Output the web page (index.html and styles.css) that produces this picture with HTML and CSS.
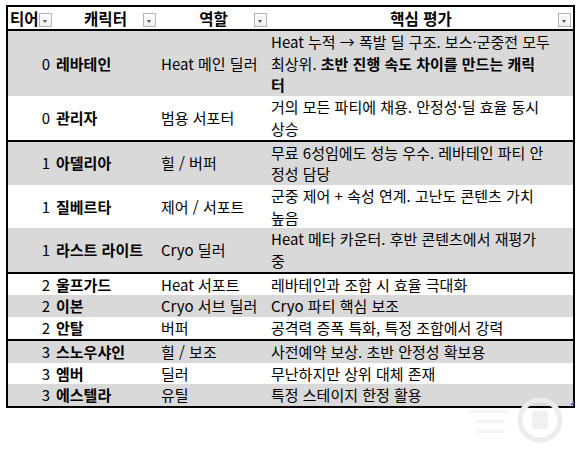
FILE: index.html
```html
<!DOCTYPE html>
<html lang="ko">
<head>
<meta charset="utf-8">
<link rel="stylesheet" href="styles.css">
</head>
<body>
<div class="sheet">
<table class="tier">
  <colgroup>
    <col class="c-tier"><col class="c-name"><col class="c-role"><col class="c-eval">
  </colgroup>
  <thead>
    <tr>
      <th class="h-tier"><span class="h-text">티어</span><span class="dd"></span></th>
      <th><span class="h-text">캐릭터</span><span class="dd"></span></th>
      <th><span class="h-text">역할</span><span class="dd"></span></th>
      <th><span class="h-text">핵심 평가</span><span class="dd"></span></th>
    </tr>
  </thead>
  <tbody class="group">
    <tr class="gray">
      <td class="num">0</td><td class="name">레바테인</td><td class="role">Heat 메인 딜러</td>
      <td class="eval">Heat 누적 → 폭발 딜 구조. 보스·군중전 모두<br>최상위. <b>초반 진행 속도 차이를 만드는 캐릭<br>터</b></td>
    </tr>
    <tr class="white">
      <td class="num">0</td><td class="name">관리자</td><td class="role">범용 서포터</td>
      <td class="eval">거의 모든 파티에 채용. 안정성·딜 효율 동시<br>상승</td>
    </tr>
  </tbody>
  <tbody class="group">
    <tr class="gray">
      <td class="num">1</td><td class="name">아델리아</td><td class="role">힐 / 버퍼</td>
      <td class="eval">무료 6성임에도 성능 우수. 레바테인 파티 안<br>정성 담당</td>
    </tr>
    <tr class="white">
      <td class="num">1</td><td class="name">질베르타</td><td class="role">제어 / 서포트</td>
      <td class="eval">군중 제어 + 속성 연계. 고난도 콘텐츠 가치<br>높음</td>
    </tr>
    <tr class="gray">
      <td class="num">1</td><td class="name">라스트 라이트</td><td class="role">Cryo 딜러</td>
      <td class="eval">Heat 메타 카운터. 후반 콘텐츠에서 재평가<br>중</td>
    </tr>
  </tbody>
  <tbody class="group">
    <tr class="white">
      <td class="num">2</td><td class="name">울프가드</td><td class="role">Heat 서포트</td>
      <td class="eval">레바테인과 조합 시 효율 극대화</td>
    </tr>
    <tr class="gray">
      <td class="num">2</td><td class="name">이본</td><td class="role">Cryo 서브 딜러</td>
      <td class="eval">Cryo 파티 핵심 보조</td>
    </tr>
    <tr class="white">
      <td class="num">2</td><td class="name">안탈</td><td class="role">버퍼</td>
      <td class="eval">공격력 증폭 특화, 특정 조합에서 강력</td>
    </tr>
  </tbody>
  <tbody class="group">
    <tr class="gray">
      <td class="num">3</td><td class="name">스노우샤인</td><td class="role">힐 / 보조</td>
      <td class="eval">사전예약 보상. 초반 안정성 확보용</td>
    </tr>
    <tr class="white">
      <td class="num">3</td><td class="name">엠버</td><td class="role">딜러</td>
      <td class="eval">무난하지만 상위 대체 존재</td>
    </tr>
    <tr class="gray">
      <td class="num">3</td><td class="name">에스텔라</td><td class="role">유틸</td>
      <td class="eval">특정 스테이지 한정 활용</td>
    </tr>
  </tbody>
</table>
<span class="handle"></span>
<svg class="watermark" width="110" height="50" viewBox="0 0 110 50">
  <circle cx="75" cy="22" r="20" fill="none" stroke="#ececec" stroke-width="5"/>
  <rect x="67" y="13" width="16" height="18" fill="#f0f0f0"/>
  <rect x="4" y="12" width="40" height="3" fill="#f5f5f5"/>
  <rect x="10" y="22" width="30" height="3" fill="#f5f5f5"/>
  <rect x="12" y="32" width="28" height="3" fill="#f5f5f5"/>
</svg>
</div>
</body>
</html>
```

FILE: styles.css
```css
html, body {
  margin: 0;
  padding: 0;
  background: #ffffff;
}

body {
  font-family: "Noto Sans CJK KR", "Noto Sans", sans-serif;
  font-size: 15px;
  color: #000;
}

.sheet {
  position: relative;
  width: 579px;
  height: 452px;
  padding: 5px 0 0 6px;
  box-sizing: border-box;
}

.tier {
  border-collapse: collapse;
  table-layout: fixed;
  width: 567px;
  border: 2px solid #000;
}

.c-tier { width: 46px; }
.c-name { width: 105px; }
.c-role { width: 111px; }
.c-eval { width: 305px; }

thead tr {
  height: 23px;
  background: #fff;
}

th {
  position: relative;
  padding: 0;
  font-weight: bold;
  font-size: 15.5px;
  text-align: center;
  line-height: 22px;
  white-space: nowrap;
  overflow: hidden;
  border-bottom: 2px solid #000;
}

.h-tier {
  text-align: left;
  padding-left: 2px;
}

.dd {
  position: absolute;
  right: 2px;
  bottom: 2px;
  width: 13px;
  height: 14px;
  border: 1px solid #b4b4b4;
  background: linear-gradient(#ffffff, #eeeeee);
  box-sizing: border-box;
}

.h-tier .dd {
  right: 1px;
}

.dd::after {
  content: "";
  position: absolute;
  left: 3px;
  top: 6px;
  border-left: 2.5px solid transparent;
  border-right: 2.5px solid transparent;
  border-top: 3px solid #555;
}

.group {
  border-top: 2px solid #000;
}

td {
  padding: 0;
  line-height: 21.7px;
  white-space: nowrap;
  vertical-align: middle;
}

.gray { background: #d9d9d9; }
.white { background: #ffffff; }

.num {
  text-align: right;
  padding-right: 3px;
}

.name {
  font-weight: bold;
  padding-left: 3px;
}

.role {
  padding-left: 3px;
}

.eval {
  vertical-align: top;
  padding-left: 2px;
}

.handle {
  position: absolute;
  left: 570px;
  top: 401px;
  width: 0;
  height: 0;
  border-left: 4px solid transparent;
  border-bottom: 4px solid #4a5fb0;
}

.watermark {
  position: absolute;
  left: 465px;
  top: 398px;
}
```
